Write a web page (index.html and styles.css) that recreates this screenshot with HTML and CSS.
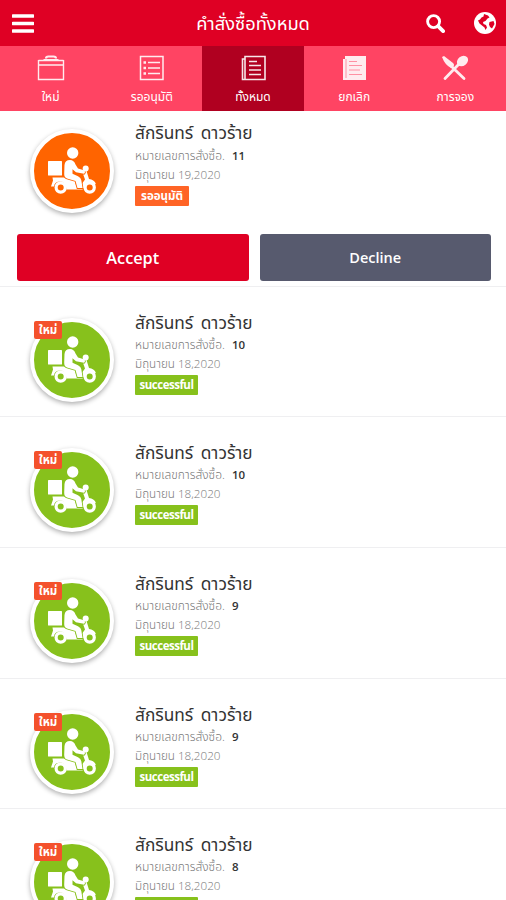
FILE: index.html
```html
<!DOCTYPE html>
<html lang="th">
<head>
<meta charset="utf-8">
<title>คำสั่งซื้อทั้งหมด</title>
<link rel="stylesheet" href="styles.css">
</head>
<body>
<svg class="defs" aria-hidden="true">
  <symbol id="rider" viewBox="0 0 48 48">
    <g fill="currentColor">
      <circle cx="24.700" cy="6" r="5.700"/>
      <rect x="0" y="14" width="14" height="14.500" rx=".6"/>
      <path d="M4.500 30.500H26l2 7.500h5l4-5.500-3-8.500h4.500l2.500 8q5 .5 6.800 4.500l-1 1.500q-5-3.500-9 0l-3.300 4.500H18.500q-.5-8-6-8-6 0-6.500 5H3l2-6z"/>
      <path class="person" d="M16.500 18q.5-5 5.500-5 4 0 5.500 4.500l2.500 4 6 1.800q2 1.800 0 3.500l-8-1.500-3.500-3v4.500l5.500 2.500q3 1.500 3.300 4l1.200 7.700h-5l-2-7-8.500-2.500q-3-1-2.800-5z"/>
      <circle cx="37.700" cy="21.500" r="3"/>
    </g>
    <circle class="wheel" cx="12.700" cy="40.500" r="4.600"/><circle class="wheel" cx="41.700" cy="40.500" r="4.600"/>
  </symbol>
</svg>
<header class="bar">
  <svg class="menu" viewBox="0 0 22 19"><path d="M1 2h20M1 9.500h20M1 17h20" stroke="currentColor" stroke-width="3.500" stroke-linecap="round"/></svg>
  <h1 class="title">คำสั่งซื้อทั้งหมด</h1>
  <div class="actions">
    <svg class="search" viewBox="0 0 20 20" fill="none" stroke="currentColor"><circle cx="8" cy="8" r="6.300" stroke-width="3"/><path d="M13 13l5 5" stroke-width="4" stroke-linecap="round"/></svg>
    <svg class="globe" viewBox="0 0 22 22"><circle cx="11" cy="11" r="11" fill="currentColor"/><path class="land" d="M10 2l4 1.500 1.500 2-2 1-2 2.500-2.500 1 .5 2 2.500 1 1 2.500-1.500 2.500-1-2.500-2.500-2-2.500-2-1.500-3 2-1 1.500-2 2-1zM15.500 10l4-1 1 3-2.500 4.500-2-1.500-1-2.500z"/></svg>
  </div>
</header>
<nav class="tabs">
  <a class="tab"><svg viewBox="0 0 28 26" fill="none" stroke="currentColor"><path d="M1.500 5V24.500h25V5M1.500 10h25M1.500 5.500h25" stroke-width="1.400"/><path d="M6.500 5h15M9 3.500q0-2 2.500-2h5q2.500 0 2.500 2" stroke-width="2.200"/></svg><span>ใหม่</span></a>
  <a class="tab"><svg viewBox="0 0 28 26" fill="none" stroke="currentColor"><rect x="2.500" y="1.500" width="22.500" height="23" stroke-width="1.500"/><path d="M10 7.500h12M10 13h12M10 18.500h12" stroke-width="1.400"/><path d="M5.500 7.500h2.500M5.500 13h2.500M5.500 18.500h2.500" stroke-width="2.400"/></svg><span>รออนุมัติ</span></a>
  <a class="tab active"><svg viewBox="0 0 28 26" fill="none" stroke="currentColor"><path d="M6 1.500h20v23H3.500V4H6zM6 4v20" stroke-width="1.600"/><path d="M10 6.500h8M10 10.500h12M10 15h12M10 19.500h12" stroke-width="1.400"/></svg><span>ทั้งหมด</span></a>
  <a class="tab"><svg viewBox="0 0 28 26"><path d="M5 1h21v24H3V4h2z" fill="currentColor"/><path class="lines" d="M6 4v19M9 6.500h8M9 10.500h13M9 15h11M9 19.500h13"/></svg><span>ยกเลิก</span></a>
  <a class="tab"><svg viewBox="0 0 28 26"><g fill="currentColor"><path d="M1 2l2-1 9 7q2 2 0 4l-2 1q-6-3-9-11z"/><ellipse cx="21.500" cy="6" rx="6" ry="4.800" transform="rotate(-38 21.500 6)"/></g><path d="M10 11l13 12.500M18 9L4 23.500" stroke="currentColor" stroke-width="2.800" stroke-linecap="round"/></svg><span>การจอง</span></a>
</nav>
<main class="orders" id="orders"></main>
<script src="app.js"></script>
</body>
</html>
```
FILE: app.js
```js
const orders = [
  { no: 11, day: 19, pending: true },
  { no: 10, day: 18 },
  { no: 10, day: 18 },
  { no: 9, day: 18 },
  { no: 9, day: 18 },
  { no: 8, day: 18, partial: true }
];

document.getElementById('orders').innerHTML = orders.map(o => `
  <article class="order ${o.pending ? 'pending' : ''}">
    <div class="summary">
      <div class="avatar"><svg><use href="#rider"/></svg>${o.pending ? '' : '<span class="new">ใหม่</span>'}</div>
      <div class="info">
        <h2 class="name">สักรินทร์ ดาวร้าย</h2>
        <p class="number"><span>หมายเลขการสั่งซื้อ.</span><b>${o.no}</b></p>
        <p class="date">มิถุนายน ${o.day},2020</p>
        <span class="status">${o.pending ? 'รออนุมัติ' : o.partial ? '' : 'successful'}</span>
      </div>
    </div>
    ${o.pending ? '<div class="buttons"><button class="accept">Accept</button><button class="decline">Decline</button></div>' : ''}
  </article>`).join('');
```
FILE: styles.css
```css
* { box-sizing: border-box; margin: 0; padding: 0; }
body { height: 900px; overflow: hidden; background: #fff; font-family: "Open Sans", "Noto Sans Thai", sans-serif; color: #333; }
.defs { display: none; }
svg { display: block; }
.bar { height: 46px; background: #df0024; color: #fff; display: grid; grid-template-columns: 86px 1fr 86px; align-items: center; }
.menu { width: 22px; height: 19px; margin-left: 12px; }
.title { font-size: 18.3px; font-weight: 400; text-align: center; line-height: 46px; white-space: nowrap; }
.actions { display: flex; align-items: center; gap: 29px; padding-left: 6px; }
.search { width: 19px; height: 19px; }
.globe { width: 22px; height: 22px; flex: none; }
.land { fill: #df0024; }
.tabs { height: 64.5px; display: grid; grid-template-columns: repeat(5, 1fr); background: #ff4463; color: #fff; }
.tab { display: flex; flex-direction: column; align-items: center; padding-top: 9px; font-size: 12px; }
.tab svg { width: 28px; height: 26px; opacity: .9; }
.tab span { line-height: 18px; margin-top: 7px; white-space: nowrap; }
.active { background: #b00020; }
.lines { stroke: #ff9aab; stroke-width: 1; fill: none; }
.order { height: 130.7px; border-bottom: 1px solid #efeff1; overflow: hidden; }
.order.pending { height: 176px; }
.summary { display: flex; height: 123.5px; padding: 20px 0 0 30px; }
.avatar { --disc: #87c11c; position: relative; width: 84px; height: 84px; margin-top: 11px; border-radius: 50%; background: var(--disc); border: 4px solid #fff; box-shadow: 0 2px 5px rgba(0,0,0,.32); color: #fff; display: flex; align-items: center; justify-content: center; flex: none; }
.avatar svg { width: 48px; height: 48px; }
.person { stroke: var(--disc); stroke-width: 1.8; paint-order: stroke; }
.wheel { fill: var(--disc); stroke: currentColor; stroke-width: 3.2; }
.new { position: absolute; left: 0; top: -1px; width: 28px; height: 18px; border-radius: 2px; background: #f4512c; font-size: 11.5px; font-weight: 700; line-height: 18px; text-align: center; }
.info { margin-left: 21px; padding-top: 3px; display: flex; flex-direction: column; align-items: flex-start; white-space: nowrap; }
.name { font-size: 17.3px; word-spacing: 3px; font-weight: 400; line-height: 25px; height: 25px; color: #333; }
.number, .date { font-size: 12px; font-weight: 300; line-height: 20px; height: 20px; color: #777; }
.number { display: flex; }
.number span { width: 97px; }
.number b { font-weight: 600; font-size: 11.5px; color: #333; }
.date { font-size: 11.7px; line-height: 17px; }
.status { height: 20px; line-height: 19px; border-radius: 1px; background: #87c11c; color: #fff; font-size: 11.5px; letter-spacing: -.5px; font-weight: 700; width: 63px; text-align: center; }
.pending .summary { padding-top: 5px; }
.pending .info { padding-top: 5px; }
.pending .avatar { --disc: #ff6400; margin-top: 13px; }
.pending .name { line-height: 24px; }
.pending .status { background: #ff6426; width: 54px; letter-spacing: 0; }
.buttons { display: flex; gap: 11px; padding: 0 15px 0 17px; }
.buttons button { flex: 1; height: 47px; border: 0; border-radius: 3px; color: #fff; font: 600 16px "Open Sans", sans-serif; }
.buttons .accept { background: #df0024; font-size: 16.3px; }
.buttons .decline { background: #575a6e; font-size: 14.5px; }
```
